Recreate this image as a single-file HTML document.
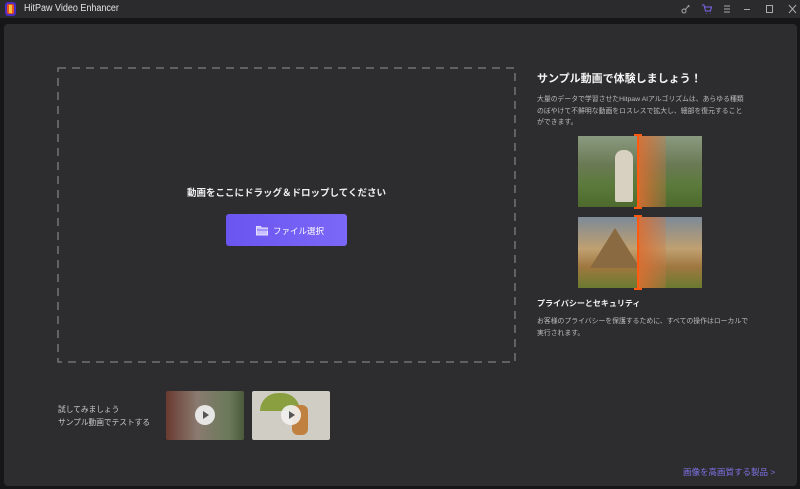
<!DOCTYPE html>
<html><head><meta charset="utf-8"><style>
*{margin:0;padding:0;box-sizing:border-box}
body{width:800px;height:489px;background:#161618;font-family:"Liberation Sans","Noto Sans CJK JP",sans-serif;position:relative;overflow:hidden;color:#fff}
.tb{position:absolute;left:0;top:0;width:800px;height:18px;background:#2b2b2d}
.panel{position:absolute;left:4px;top:24px;width:793px;height:462px;background:#2d2d2f;border-radius:4px}
.abs{position:absolute;white-space:nowrap}
</style></head><body>
<div class="tb"></div>
<div class="abs" style="left:5px;top:2px;width:11px;height:14px;background:#4a2dbf;border-radius:3px"></div>
<div class="abs" style="left:7px;top:4px;width:7px;height:10px;background:#e8501c;border-radius:2px"></div>
<div class="abs" style="left:9px;top:5px;width:3px;height:8px;background:#f5c040"></div>
<div class="abs" style="left:24px;top:3px;font-size:10px;color:#e6e6e6;transform:scaleX(0.9);transform-origin:left">HitPaw Video Enhancer</div>
<svg class="abs" style="left:680px;top:3px" width="120" height="12" viewBox="0 0 120 12" fill="none" stroke-width="1">
<circle cx="4" cy="8" r="2" stroke="#aaa"/><path d="M5.5 6.5L9 2M8 3l1.5 1" stroke="#aaa"/>
<path d="M22 2h2l1.5 6h5l1-4h-6.5M26 10.5h.5M30 10.5h.5" stroke="#7b68ee"/>
<path d="M44 3h6M44 6h6M44 9h6" stroke="#aaa"/>
<path d="M64 6.5h6" stroke="#aaa"/>
<rect x="86.5" y="2.5" width="6" height="7" stroke="#aaa"/>
<path d="M109 2l7 8M116 2l-7 8" stroke="#aaa"/>
</svg>
<div class="panel"></div>
<svg class="abs" style="left:57px;top:67px" width="460" height="297"><rect x="1" y="1" width="457" height="294" fill="none" stroke="#7f7f81" stroke-width="1.3" stroke-dasharray="8 6"/></svg>
<div class="abs" style="left:58px;top:185px;width:457px;text-align:center;font-size:9.5px;font-weight:bold;color:#f0f0f0">動画をここにドラッグ＆ドロップしてください</div>
<div class="abs" style="left:226px;top:214px;width:121px;height:32px;background:linear-gradient(90deg,#6a55f0,#7b68f8);border-radius:3px"></div>
<svg class="abs" style="left:256px;top:225px" width="13" height="11" viewBox="0 0 13 11"><path d="M.5 1.5h4l1 1.5h6v7h-11z" fill="#c8c0ff" stroke="#e6e0ff" stroke-width="1"/><path d="M1 5h11" stroke="#7b68f8"/></svg>
<div class="abs" style="left:273px;top:225px;font-size:8.5px;color:#fff">ファイル選択</div>
<div class="abs" style="left:537px;top:70px;font-size:11px;font-weight:bold;color:#f5f5f5">サンプル動画で体験しましょう！</div>
<div class="abs" style="left:537px;top:94px;font-size:6.85px;line-height:11.5px;color:#bcbcbc">大量のデータで学習させたHitpaw AIアルゴリズムは、あらゆる種類<br>のぼやけて不鮮明な動画をロスレスで拡大し、細部を復元すること<br>ができます。</div>
<div class="abs" style="left:578px;top:136px;width:124px;height:71px;background:linear-gradient(180deg,#8a9a80 0%,#6b7a55 40%,#5a7a3a 70%,#4e6a2e 100%)"></div>
<div class="abs" style="left:615px;top:150px;width:18px;height:52px;background:#d8d0c0;border-radius:8px 8px 2px 2px"></div>
<div class="abs" style="left:638px;top:136px;width:28px;height:71px;background:linear-gradient(90deg,rgba(220,110,50,.9),rgba(200,120,70,.3))"></div>
<div class="abs" style="left:578px;top:217px;width:124px;height:71px;background:linear-gradient(180deg,#7d8a98 0%,#c0a070 45%,#a07840 70%,#6a7a30 100%)"></div>
<div class="abs" style="left:590px;top:228px;width:0;height:0;border-left:25px solid transparent;border-right:25px solid transparent;border-bottom:40px solid #8a6a40"></div>
<div class="abs" style="left:638px;top:217px;width:28px;height:71px;background:linear-gradient(90deg,rgba(220,110,50,.9),rgba(200,120,70,.3))"></div>
<div class="abs" style="left:637px;top:134px;width:2px;height:75px;background:#ff5a10"></div>
<div class="abs" style="left:634px;top:134px;width:8px;height:2px;background:#ff5a10"></div>
<div class="abs" style="left:634px;top:207px;width:8px;height:2px;background:#ff5a10"></div>
<div class="abs" style="left:637px;top:215px;width:2px;height:75px;background:#ff5a10"></div>
<div class="abs" style="left:634px;top:215px;width:8px;height:2px;background:#ff5a10"></div>
<div class="abs" style="left:634px;top:288px;width:8px;height:2px;background:#ff5a10"></div>
<div class="abs" style="left:537px;top:298px;font-size:8px;font-weight:bold;color:#f0f0f0">プライバシーとセキュリティ</div>
<div class="abs" style="left:537px;top:316px;font-size:6.85px;line-height:11.5px;color:#bcbcbc">お客様のプライバシーを保護するために、すべての操作はローカルで<br>実行されます。</div>
<div class="abs" style="left:58px;top:403px;font-size:7.7px;line-height:13px;color:#c8c8c8">試してみましょう<br>サンプル動画でテストする</div>
<div class="abs" style="left:166px;top:391px;width:78px;height:49px;border-radius:2px;background:linear-gradient(90deg,#6a3a30,#8a7a70 40%,#6a7a5a 80%,#4a5a3a)"></div>
<div class="abs" style="left:252px;top:391px;width:78px;height:49px;border-radius:2px;background:#cfcdc4"></div>
<div class="abs" style="left:260px;top:393px;width:40px;height:18px;background:#8aa040;border-radius:20px 20px 0 0"></div>
<div class="abs" style="left:292px;top:405px;width:16px;height:30px;background:#c08040;border-radius:6px"></div>
<svg class="abs" style="left:194px;top:404px" width="22" height="22"><circle cx="11" cy="11" r="10" fill="#f2f2f2" opacity=".9"/><path d="M9 7l6 4-6 4z" fill="#555"/></svg>
<svg class="abs" style="left:280px;top:404px" width="22" height="22"><circle cx="11" cy="11" r="10" fill="#f2f2f2" opacity=".9"/><path d="M9 7l6 4-6 4z" fill="#555"/></svg>
<div class="abs" style="left:683px;top:466px;font-size:8.5px;color:#7d70e0">画像を高画質する製品 &gt;</div>
</body></html>
